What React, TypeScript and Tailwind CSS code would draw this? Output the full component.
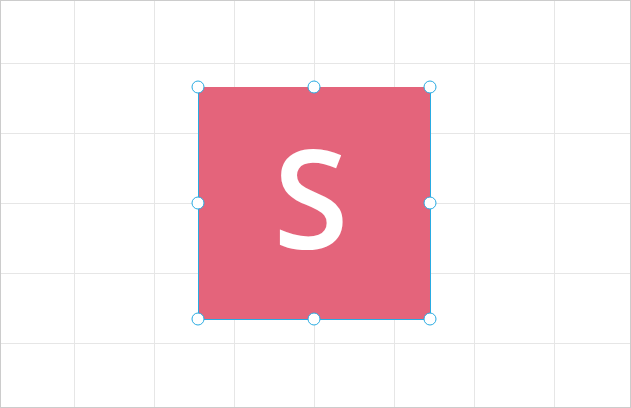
const handles: [number, number][] = [
  [0, 0],
  [116, 0],
  [232, 0],
  [0, 116],
  [232, 116],
  [0, 232],
  [116, 232],
  [232, 232],
];

const vLines = [74, 154, 234, 314, 394, 474, 554];
const hLines = [63, 133, 203, 273, 343];

function Grid() {
  return (
    <svg className="absolute inset-0" width={631} height={408}>
      {vLines.map((x) => (
        <line key={"v" + x} x1={x + 0.5} y1={0} x2={x + 0.5} y2={408} stroke="#e6e6e6" strokeWidth={1} />
      ))}
      {hLines.map((y) => (
        <line key={"h" + y} x1={0} y1={y + 0.5} x2={631} y2={y + 0.5} stroke="#e6e6e6" strokeWidth={1} />
      ))}
      <rect x={0.5} y={0.5} width={630} height={407} fill="none" stroke="#cccccc" strokeWidth={1} />
    </svg>
  );
}

export default function App() {
  return (
    <div className="relative w-[631px] h-[408px] bg-white overflow-hidden">
      <Grid />

      {/* selected shape */}
      <div className="absolute left-[198px] top-[87px] w-[233px] h-[233px]">
        <div className="w-full h-full bg-[#e4647b] border-l border-r border-b border-[#29abe2] flex items-center justify-center">
          <span
            className="text-white text-[137px] font-[650] leading-none -mt-[14px] -ml-[7px]"
            style={{ fontFamily: '"Open Sans", "Noto Sans", sans-serif' }}
          >
            S
          </span>
        </div>
        {handles.map(([x, y]) => (
          <div
            key={x + "-" + y}
            className="absolute w-[13px] h-[13px] rounded-full bg-white border-[1.5px] border-[#29abe2] -translate-x-1/2 -translate-y-1/2"
            style={{ left: x, top: y }}
          />
        ))}
      </div>
    </div>
  );
}
